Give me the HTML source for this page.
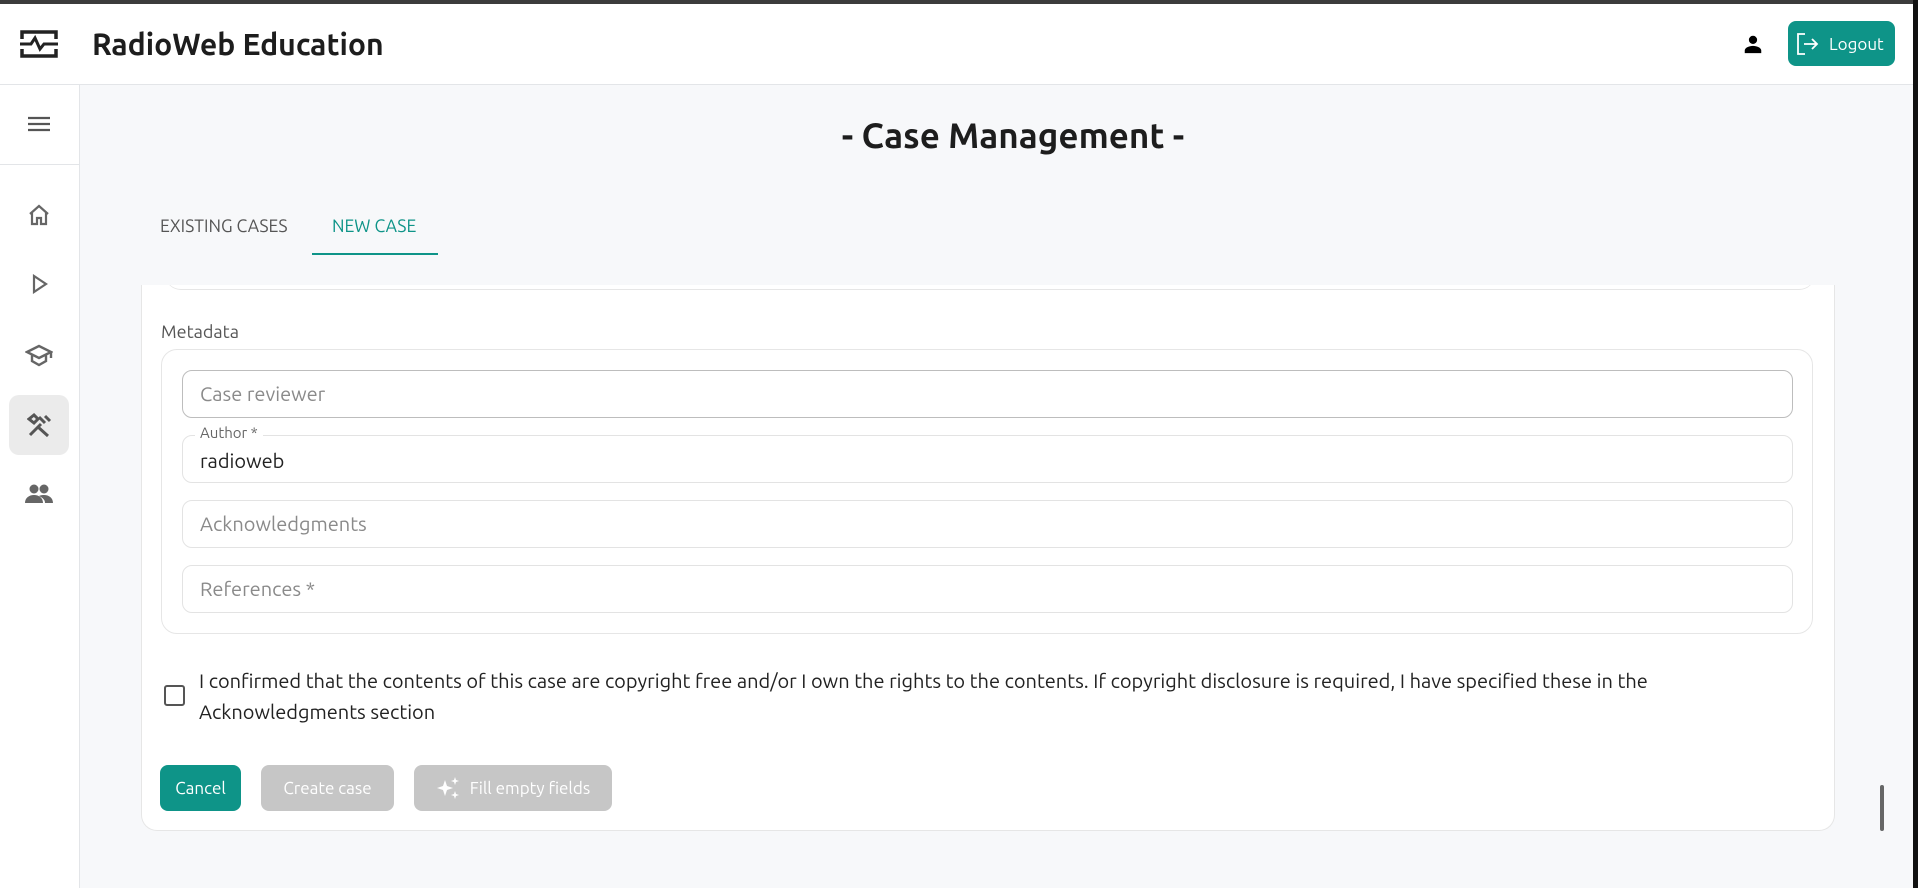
<!DOCTYPE html>
<html><head><meta charset="utf-8"><style>
*{box-sizing:border-box;margin:0;padding:0}
body{width:1918px;height:888px;overflow:hidden;background:#f7f8fa;font-family:"Ubuntu","Liberation Sans","DejaVu Sans",sans-serif;position:relative;color:#222}
.abs{position:absolute}
.top{left:0;top:0;width:1918px;height:4px;background:#3c3c3c}
.rb{right:0;top:0;width:5px;height:888px;background:#111}
.hdr{left:0;top:4px;width:1913px;height:81px;background:#fff;border-bottom:1px solid #e3e5e8}
.side{left:0;top:85px;width:80px;height:803px;background:#fff;border-right:1px solid #e3e5e8}
.inp{position:absolute;left:182px;width:1611px;height:48px;border:1px solid #e3e3e3;border-radius:10px;font-size:20px;color:#8a8a8a;padding:11px 0 0 17px}
.btn{position:absolute;top:765px;height:46px;border-radius:8px;color:#fff;font-size:17px;display:flex;align-items:center;justify-content:center}
</style></head><body>
<div class="abs top"></div>
<div class="abs hdr"></div>
<svg class="abs" style="left:20px;top:29px" width="38" height="30" viewBox="0 0 38 30" fill="none" stroke="#222" stroke-width="3.5"><path d="M2 10V3h34v7M2 20v7h34v-7"/><path d="M0 15h11l4-6 5 11 4-5h14" stroke-width="3"/></svg>
<div class="abs" style="left:92px;top:27px;font-size:30.2px;font-weight:600;color:#1d1d1d">RadioWeb Education</div>
<svg class="abs" style="left:1742px;top:33px" width="22" height="22" viewBox="0 0 24 24"><path d="M12 12a4.5 4.5 0 1 0 0-9 4.5 4.5 0 0 0 0 9zm0 2c-4 0-9 2-9 5v3h18v-3c0-3-5-5-9-5z" fill="#000"/></svg>
<div class="abs" style="left:1788px;top:21px;width:107px;height:45px;background:#0e9488;border-radius:8px;color:#fff;font-size:17px">
<svg class="abs" style="left:8px;top:12px" width="24" height="22" viewBox="0 0 24 22" fill="none" stroke="#fff" stroke-width="1.8"><path d="M9 1H2v20h7M8 11h13M16 6l5 5-5 5"/></svg>
<span class="abs" style="left:41px;top:14px">Logout</span></div>
<div class="abs side"></div>
<div class="abs" style="left:0;top:164px;width:79px;height:1px;background:#e3e5e8"></div>
<svg class="abs" style="left:27px;top:116px" width="24" height="16"><path d="M1 2h22M1 8h22M1 14h22" stroke="#555" stroke-width="2.2"/></svg>
<svg class="abs" style="left:27px;top:203px" width="24" height="24" viewBox="0 0 24 24" fill="none" stroke="#666" stroke-width="2.2"><path d="M3 11l9-8 9 8M5 9v12h5v-6h4v6h5V9"/></svg>
<svg class="abs" style="left:32px;top:274px" width="16" height="20" fill="none" stroke="#666" stroke-width="2.2"><path d="M2 2v16l12-8z"/></svg>
<svg class="abs" style="left:25px;top:343px" width="28" height="24" viewBox="0 0 28 24" fill="none" stroke="#666" stroke-width="2.4"><path d="M2 9l12-6 12 6-12 6zM7 12v6l7 4 7-4v-6M26 9v6"/></svg>
<div class="abs" style="left:9px;top:395px;width:60px;height:60px;background:#ebebeb;border-radius:10px"></div>
<svg class="abs" style="left:27px;top:413px" width="26" height="24" viewBox="0 0 26 24" fill="none" stroke="#555" stroke-width="3"><path d="M3 22L14 11M12 4l6 6M18 3l5 5M11 14l10 9M2 6l5-4 4 4-4 4z"/></svg>
<svg class="abs" style="left:25px;top:484px" width="28" height="20" viewBox="0 0 28 20" fill="#666"><circle cx="9" cy="5" r="4.5"/><circle cx="19" cy="5" r="4.5"/><path d="M0 19c0-5 4-8 9-8s9 3 9 8zM14 12c2-1 4-1 5-1 5 0 9 3 9 8h-8c0-3-2-5-6-7z"/></svg>
<div class="abs" style="left:96px;top:115px;width:1834px;text-align:center;font-size:35px;font-weight:700;color:#1d1d1d">- Case Management -</div>
<div class="abs" style="left:160px;top:217px;font-size:17.5px;color:#555">EXISTING CASES</div>
<div class="abs" style="left:332px;top:217px;font-size:17.5px;color:#0e9488">NEW CASE</div>
<div class="abs" style="left:312px;top:253px;width:126px;height:2px;background:#0e9488"></div>
<div class="abs" style="left:141px;top:285px;width:1694px;height:546px;background:#fff;border:1px solid #e6e6e6;border-top:none;border-radius:0 0 16px 16px"></div>
<div class="abs" style="left:165px;top:270px;width:1650px;height:20px;border-bottom:1px solid #e6e6e6;border-radius:0 0 16px 16px;background:#fff"></div>
<div class="abs" style="left:141px;top:262px;width:1700px;height:23px;background:#f7f8fa"></div>
<div class="abs" style="left:161px;top:322px;font-size:18px;color:#555">Metadata</div>
<div class="abs" style="left:161px;top:349px;width:1652px;height:285px;border:1px solid #e6e6e6;border-radius:16px"></div>
<div class="inp" style="top:370px;border-color:#bdbdbd">Case reviewer</div>
<div class="inp" style="top:435px;color:#222;padding-top:13px">radioweb</div>
<div class="abs" style="left:195px;top:424px;background:#fff;padding:0 5px;font-size:15px;color:#666">Author *</div>
<div class="inp" style="top:500px">Acknowledgments</div>
<div class="inp" style="top:565px">References *</div>
<div class="abs" style="left:164px;top:685px;width:21px;height:21px;border:2px solid #555;border-radius:3px"></div>
<div class="abs" style="left:199px;top:665px;font-size:20px;line-height:31px;color:#222;width:1600px">I confirmed that the contents of this case are copyright free and/or I own the rights to the contents. If copyright disclosure is required, I have specified these in the<br>Acknowledgments section</div>
<div class="btn" style="left:160px;width:81px;background:#0e9488">Cancel</div>
<div class="btn" style="left:261px;width:133px;background:#c6c6c6">Create case</div>
<div class="btn" style="left:414px;width:198px;background:#c6c6c6"><svg width="26" height="24" viewBox="0 0 26 24" fill="#fff" style="margin-right:8px"><path d="M9 4l2 6 6 2-6 2-2 6-2-6-6-2 6-2zM19 1l1 3 3 1-3 1-1 3-1-3-3-1 3-1zM19 15l1 3 3 1-3 1-1 3-1-3-3-1 3-1z"/></svg>Fill empty fields</div>
<div class="abs" style="left:1880px;top:785px;width:4px;height:46px;background:#666;border-radius:2px"></div>
<div class="abs rb"></div>
</body></html>
